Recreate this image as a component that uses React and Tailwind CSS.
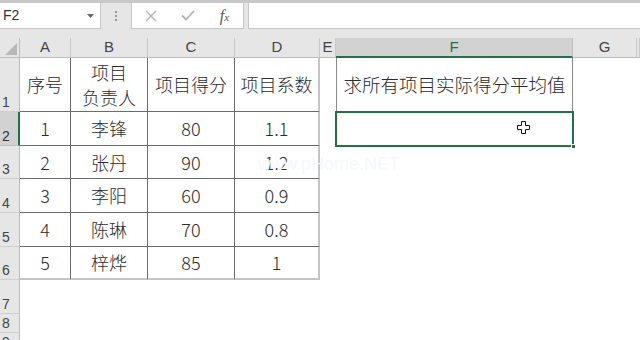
import React from 'react';

const font = { fontFamily: '"Liberation Sans", "Noto Sans CJK SC", sans-serif' };
const cjk = { fontFamily: '"Noto Sans CJK SC", "Liberation Sans", sans-serif' };

const cols = ['A', 'B', 'C', 'D', 'E', 'F', 'G', ''];

const data = [
  ['1', '李锋', '80', '1.1'],
  ['2', '张丹', '90', '1.2'],
  ['3', '李阳', '60', '0.9'],
  ['4', '陈琳', '70', '0.8'],
  ['5', '梓烨', '85', '1'],
];

const FormulaBar = () => (
  <div className="h-[38px] bg-[#e6e6e6] border-t-[3px] border-[#c8c8c8] relative">
    <div className="flex h-[26px] items-stretch">
      <div className="w-[101px] bg-white border-r border-b border-[#c6c6c6] flex items-center justify-between pl-[3px] pr-[6px]">
        <span className="text-[14px] text-[#333]" style={font}>F2</span>
        <svg width="7" height="4" viewBox="0 0 7 4"><path d="M0 0h7L3.5 4z" fill="#666" /></svg>
      </div>
      <div className="w-[30px] flex flex-col items-center justify-center gap-[2px]">
        <span className="w-[2px] h-[2px] bg-[#9a9a9a]" />
        <span className="w-[2px] h-[2px] bg-[#9a9a9a]" />
        <span className="w-[2px] h-[2px] bg-[#9a9a9a]" />
      </div>
      <div className="w-[113px] bg-white border border-t-0 border-[#c6c6c6] flex items-center">
        <div className="w-[37px] flex justify-center">
          <svg width="12" height="12" viewBox="0 0 12 12"><path d="M1 1l10 10M11 1L1 11" stroke="#b4b4b4" strokeWidth="1.4" /></svg>
        </div>
        <div className="w-[37px] flex justify-center">
          <svg width="14" height="11" viewBox="0 0 14 11"><path d="M1 5.5l4 4L13 1" stroke="#b4b4b4" strokeWidth="1.8" fill="none" /></svg>
        </div>
        <div className="w-[37px] flex justify-center">
          <span className="text-[16px] italic text-[#555]" style={{ fontFamily: '"Liberation Serif", serif' }}>f<span className="text-[11px]">x</span></span>
        </div>
      </div>
      <div className="w-[4px]" />
      <div className="flex-1 bg-white border-l border-b border-[#c6c6c6]" />
    </div>
  </div>
);

const ColHeader = ({ label, active }) => (
  <div
    className={
      active
        ? 'bg-[#d2d2d2] border-r border-[#bdbdbd] border-b-2 border-b-[#217346] flex items-center justify-center text-[15px] text-[#217346]'
        : 'bg-[#e6e6e6] border-r border-[#c8c8c8] border-b border-b-[#bdbdbd] flex items-center justify-center text-[15px] text-[#444]'
    }
    style={font}
  >
    {label}
  </div>
);

const RowHeader = ({ label, active }) => (
  <div
    className={
      active
        ? 'bg-[#d2d2d2] border-b border-[#bdbdbd] border-r-2 border-r-[#217346] flex items-end pl-[2px] text-[14px] leading-[18px] text-[#333]'
        : 'bg-[#e6e6e6] border-b border-[#cfcfcf] border-r border-r-[#bdbdbd] flex items-end pl-[2px] text-[14px] leading-[18px] text-[#444]'
    }
    style={font}
  >
    {label}
  </div>
);

const Cell = ({ children, col, row, twoLine }) => {
  const right = col === 3 ? 'border-r-2 border-r-[#c4c4c4]' : 'border-r border-r-[#6b6b6b]';
  const bottom = row === 5 ? 'border-b-2 border-b-[#c4c4c4]' : 'border-b border-b-[#6b6b6b]';
  return (
    <div
      className={`${right} ${bottom} flex items-center justify-center text-center text-[18px] font-light text-[#2b2b2b] ${twoLine ? 'leading-[25px]' : ''}`}
      style={cjk}
    >
      {children}
    </div>
  );
};

export default function App() {
  const headers = ['序号', '项目\n负责人', '项目得分', '项目系数'];
  return (
    <div className="w-[640px] h-[340px] bg-white overflow-hidden relative">
      <FormulaBar />
      <div className="grid grid-cols-[20px_51px_77px_87px_85px_16px_237px_64px_1fr] grid-rows-[20px_54px_34px_33px_34px_34px_33px_34px_19px_1fr] h-[302px]">
        {/* header row */}
        <div className="bg-[#e6e6e6] border-r border-b border-[#bdbdbd] flex items-end justify-end p-[2px]">
          <svg width="12" height="12" viewBox="0 0 12 12"><path d="M12 0v12H0z" fill="#b8b8b8" /></svg>
        </div>
        {cols.map((c, i) => (
          <ColHeader key={i} label={c} active={c === 'F'} />
        ))}

        {/* row 1 */}
        <RowHeader label="1" />
        {headers.map((h, i) => (
          <Cell key={i} col={i} row={0} twoLine={i === 1}>
            <span className="whitespace-pre-line">{h}</span>
          </Cell>
        ))}
        <div />
        <div className="border-l border-r border-[#8c8c8c] flex items-center justify-center text-[18.5px] font-light text-[#2b2b2b] whitespace-nowrap" style={cjk}>
          求所有项目实际得分平均值
        </div>
        <div />
        <div />

        {/* data rows */}
        {data.map((r, ri) => (
          <React.Fragment key={ri}>
            <RowHeader label={String(ri + 2)} active={ri === 0} />
            {r.map((v, ci) => (
              <Cell key={ci} col={ci} row={ri + 1}>{v}</Cell>
            ))}
            <div />
            {ri === 0 ? (
              <div className="relative">
                <div className="absolute -top-px -left-px -right-px -bottom-px border-2 border-[#217346]" />
                <div className="absolute -right-[3px] -bottom-[3px] w-[5px] h-[5px] bg-[#217346] border border-white" />
                <svg className="absolute left-[181px] top-[9px]" width="13" height="13" viewBox="0 0 13 13">
                  <path d="M4.5 0.5h4v4h4v4h-4v4h-4v-4h-4v-4h4z" fill="white" stroke="#111" strokeWidth="1" />
                </svg>
              </div>
            ) : (
              <div />
            )}
            <div />
            <div />
          </React.Fragment>
        ))}

        {/* empty rows */}
        {['7', '8', '9'].map((n) => (
          <React.Fragment key={n}>
            <RowHeader label={n} />
            {cols.map((c, i) => (
              <div key={i} />
            ))}
          </React.Fragment>
        ))}
      </div>
      <div className="absolute left-[258px] top-[151px] text-[18px] text-[#f5f8fc] pointer-events-none" style={font}>
        www.pHome.NET
      </div>
    </div>
  );
}
